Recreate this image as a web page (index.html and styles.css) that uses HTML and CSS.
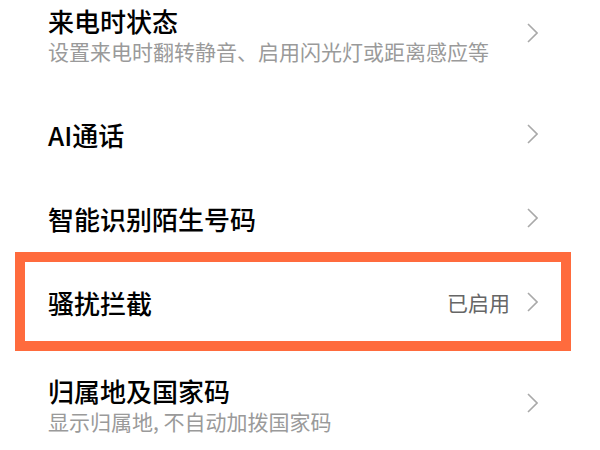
FILE: index.html
```html
<!DOCTYPE html>
<html lang="zh-CN">
<head>
<meta charset="utf-8">
<link rel="stylesheet" href="styles.css">
</head>
<body>
<div class="list">
  <div class="row row-two">
    <div class="text">
      <div class="title">来电时状态</div>
      <div class="sub">设置来电时翻转静音、启用闪光灯或距离感应等</div>
    </div>
    <svg class="chev" viewBox="0 0 11 20"><polyline points="1,1 10,10 1,19"/></svg>
  </div>
  <div class="row">
    <div class="text"><div class="title">AI通话</div></div>
    <svg class="chev" viewBox="0 0 11 20"><polyline points="1,1 10,10 1,19"/></svg>
  </div>
  <div class="row">
    <div class="text"><div class="title">智能识别陌生号码</div></div>
    <svg class="chev" viewBox="0 0 11 20"><polyline points="1,1 10,10 1,19"/></svg>
  </div>
  <div class="row row-hl">
    <div class="text"><div class="title">骚扰拦截</div></div>
    <span class="value">已启用</span>
    <svg class="chev" viewBox="0 0 11 20"><polyline points="1,1 10,10 1,19"/></svg>
    <div class="hl-box"></div>
  </div>
  <div class="row row-two">
    <div class="text">
      <div class="title">归属地及国家码</div>
      <div class="sub">显示归属地, 不自动加拨国家码</div>
    </div>
    <svg class="chev" viewBox="0 0 11 20"><polyline points="1,1 10,10 1,19"/></svg>
  </div>
</div>
</body>
</html>
```

FILE: styles.css
```css
html, body {
  margin: 0;
  padding: 0;
  background: #ffffff;
}
body {
  width: 600px;
  height: 450px;
  overflow: hidden;
  font-family: "Noto Sans CJK SC", "Noto Sans", sans-serif;
}
.list {
  margin-top: -26px;
  display: flex;
  flex-direction: column;
}
.row {
  position: relative;
  height: 84px;
  display: flex;
  align-items: center;
  padding: 0 62px 0 48px;
}
.row-two {
  height: 118px;
}
.row-two .text {
  padding-top: 5px;
}
.text {
  flex: 1;
  min-width: 0;
}
.title {
  font-size: 26px;
  line-height: 31px;
  font-weight: 500;
  color: #000000;
  white-space: nowrap;
}
.sub {
  font-size: 21px;
  line-height: 31px;
  color: #9a9a9a;
  white-space: nowrap;
}
.value {
  font-size: 21px;
  line-height: 30px;
  color: #666666;
  margin-right: 17px;
}
.chev {
  width: 11px;
  height: 20px;
  flex: none;
}
.chev polyline {
  fill: none;
  stroke: #a9a9a9;
  stroke-width: 1.6;
}
.hl-box {
  position: absolute;
  left: 15px;
  top: -8px;
  width: 556px;
  height: 99px;
  box-sizing: border-box;
  border: 10px solid #ff6b3d;
  pointer-events: none;
}
```
